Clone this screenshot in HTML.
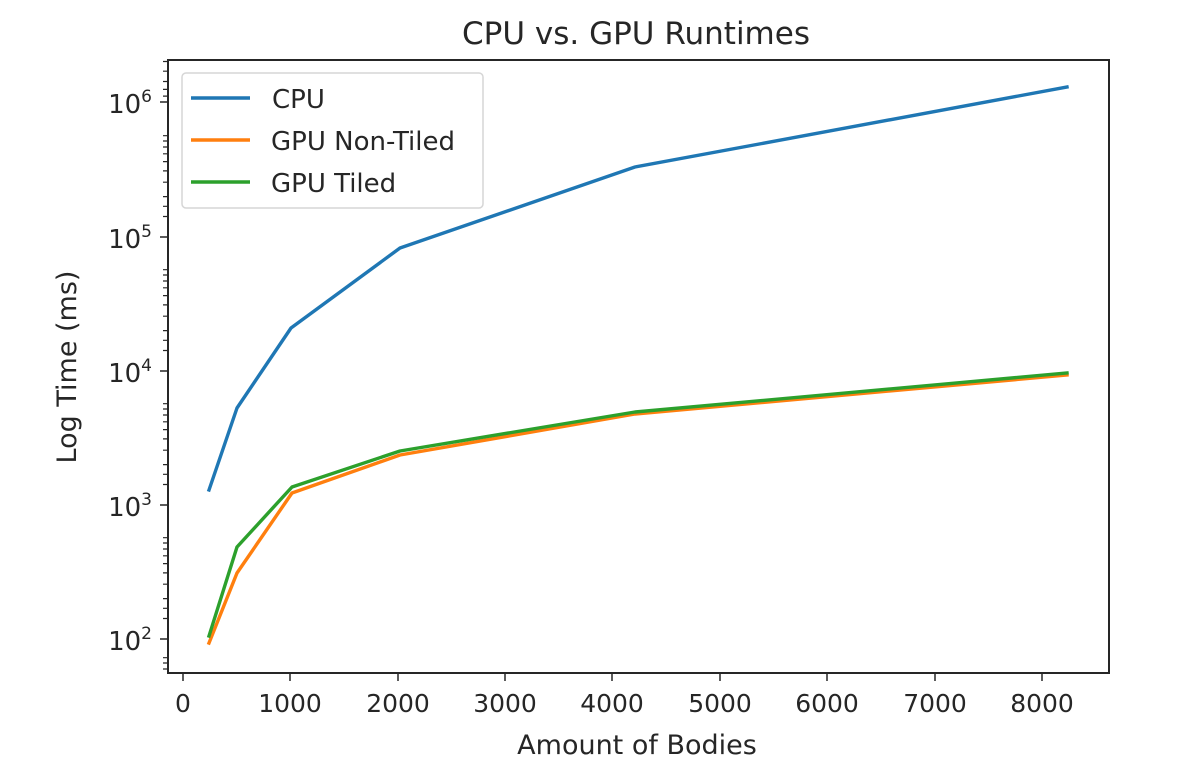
<!DOCTYPE html>
<html><head><meta charset="utf-8"><style>
html,body{margin:0;padding:0;background:#fff;}
svg{display:block;}
text{font-family:"DejaVu Sans","Liberation Sans",sans-serif;fill:#262626;}
</style></head><body>
<svg width="1195" height="780" viewBox="0 0 1195 780" xmlns="http://www.w3.org/2000/svg">
<rect width="1195" height="780" fill="#fff"/>
<text x="636" y="44" font-size="31" text-anchor="middle">CPU vs. GPU Runtimes</text>
<g stroke-width="3.4" fill="none" stroke-linejoin="round" stroke-linecap="square">
<polyline stroke="#1f77b4" points="209,490 237,408 291,328 400,248 635,167 1067,87"/>
<polyline stroke="#ff7f0e" points="209,643 237,573 292,493 400,455 635,414 1067,375"/>
<polyline stroke="#2ca02c" points="209,636 237,547 292,487 400,451 635,412 1067,373"/>
</g>
<rect x="168" y="60" width="941" height="613" fill="none" stroke="#262626" stroke-width="2"/>
<g stroke="#262626" stroke-width="1.5">
<line x1="160" y1="102" x2="168" y2="102"/>
<line x1="160" y1="237" x2="168" y2="237"/>
<line x1="160" y1="371" x2="168" y2="371"/>
<line x1="160" y1="505" x2="168" y2="505"/>
<line x1="160" y1="639" x2="168" y2="639"/>
<line x1="183" y1="673" x2="183" y2="681"/>
<line x1="290" y1="673" x2="290" y2="681"/>
<line x1="398" y1="673" x2="398" y2="681"/>
<line x1="505" y1="673" x2="505" y2="681"/>
<line x1="612" y1="673" x2="612" y2="681"/>
<line x1="720" y1="673" x2="720" y2="681"/>
<line x1="827" y1="673" x2="827" y2="681"/>
<line x1="935" y1="673" x2="935" y2="681"/>
<line x1="1042" y1="673" x2="1042" y2="681"/>
</g>
<g font-size="26" text-anchor="end">
<text x="152" y="113">10<tspan font-size="17" dy="-11">6</tspan></text>
<text x="152" y="248">10<tspan font-size="17" dy="-11">5</tspan></text>
<text x="152" y="382">10<tspan font-size="17" dy="-11">4</tspan></text>
<text x="152" y="516">10<tspan font-size="17" dy="-11">3</tspan></text>
<text x="152" y="650">10<tspan font-size="17" dy="-11">2</tspan></text>
</g>
<g font-size="25" text-anchor="middle">
<text x="183" y="712">0</text>
<text x="290" y="712">1000</text>
<text x="398" y="712">2000</text>
<text x="505" y="712">3000</text>
<text x="612" y="712">4000</text>
<text x="720" y="712">5000</text>
<text x="827" y="712">6000</text>
<text x="935" y="712">7000</text>
<text x="1042" y="712">8000</text>
</g>
<text x="637" y="754" font-size="27" text-anchor="middle">Amount of Bodies</text>
<text transform="translate(76,367) rotate(-90)" font-size="27" text-anchor="middle">Log Time (ms)</text>
<rect x="182" y="73" width="301" height="135" rx="4" fill="#fff" fill-opacity="0.8" stroke="#d6d6d6" stroke-width="1.5"/>
<line x1="191" y1="98" x2="250" y2="98" stroke="#1f77b4" stroke-width="3.4"/>
<line x1="191" y1="140" x2="250" y2="140" stroke="#ff7f0e" stroke-width="3.4"/>
<line x1="191" y1="182" x2="250" y2="182" stroke="#2ca02c" stroke-width="3.4"/>
<g font-size="26">
<text x="272" y="108">CPU</text>
<text x="271" y="150">GPU Non-Tiled</text>
<text x="271" y="192">GPU Tiled</text>
</g>
<g stroke="#262626" stroke-width="1.2">
<path d="M163 81.5h5M163 89.4h5M163 96.1h5M163 61.5h5M163 71.2h5
M163 196.6h5M163 182.2h5M163 170.9h5M163 161.6h5M163 153.8h5M163 147h5M163 141h5M163 135.7h5M163 216.5h5M163 206.3h5
M163 330.6h5M163 316.2h5M163 304.9h5M163 295.6h5M163 287.8h5M163 281h5M163 275h5M163 269.7h5M163 350.5h5M163 340.3h5
M163 464.6h5M163 450.2h5M163 438.9h5M163 429.6h5M163 421.8h5M163 415h5M163 409h5M163 403.7h5M163 484.5h5M163 474.3h5
M163 598.6h5M163 584.2h5M163 572.9h5M163 563.6h5M163 555.8h5M163 549h5M163 543h5M163 537.7h5M163 618.5h5M163 608.3h5
M163 669h5M163 663h5M163 657.7h5"/>
</g>
</svg>
</body></html>
